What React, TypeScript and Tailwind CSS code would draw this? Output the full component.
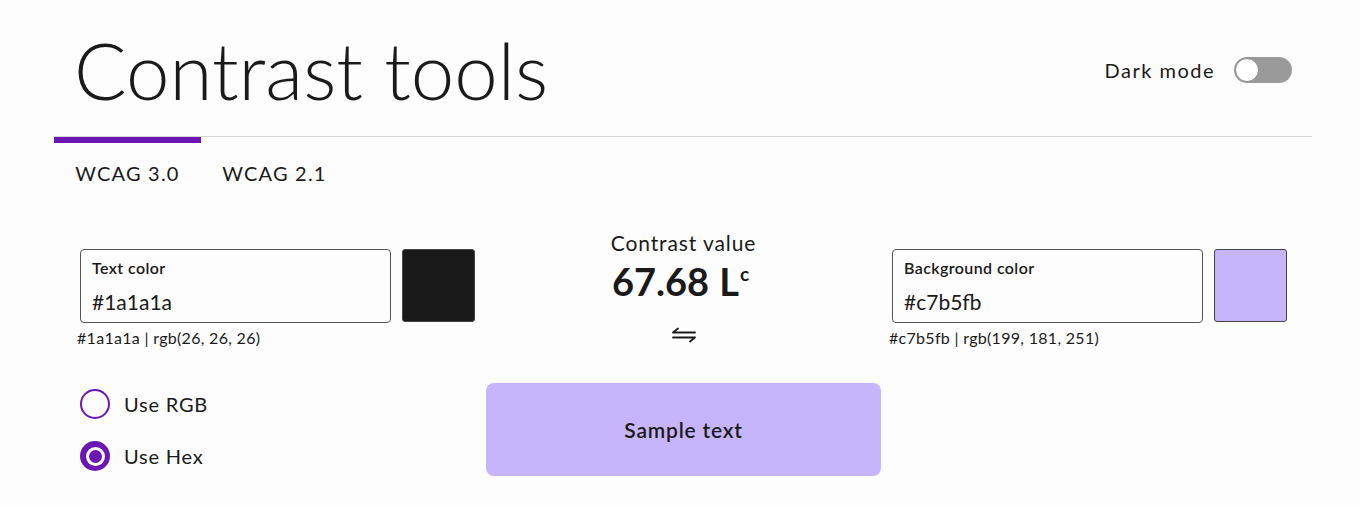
import React from 'react';

const font = { fontFamily: 'Lato, "Noto Sans", sans-serif' };

const ColorField: React.FC<{ label: string; value: string; rgb: string }> = ({ label, value, rgb }) => (
  <div className="pt-[18px]">
    <div className="flex gap-[11px]">
      <div className="w-[311px] h-[74px] border border-[#555] rounded-[4px] px-[11px] pt-[8px]">
        <div className="text-[16px] leading-[20px] font-semibold text-[#1a1a1a] tracking-[0.4px]">{label}</div>
        <div className="mt-[11px] text-[21px] leading-[26px] text-[#1a1a1a]">{value}</div>
      </div>
      <div
        className="w-[73px] h-[73px] rounded-[3px] border border-[#444]"
        style={{ backgroundColor: value }}
      />
    </div>
    <div className="mt-[5px] -ml-[3px] text-[16px] leading-[20px] text-[#1a1a1a] tracking-[0.3px]">
      {value} | {rgb}
    </div>
  </div>
);

const Radio: React.FC<{ checked?: boolean; label: string }> = ({ checked, label }) => (
  <div className="flex items-center h-[30px] gap-[14px]">
    {checked ? (
      <div className="w-[30px] h-[30px] rounded-full bg-[#6b17b3] flex items-center justify-center">
        <div className="w-[19px] h-[19px] rounded-full bg-white flex items-center justify-center">
          <div className="w-[13px] h-[13px] rounded-full bg-[#6b17b3]" />
        </div>
      </div>
    ) : (
      <div className="w-[30px] h-[30px] rounded-full border-[2.5px] border-[#6b17b3]" />
    )}
    <span className="text-[20px] leading-[24px] text-[#1a1a1a] tracking-[0.8px]">{label}</span>
  </div>
);

const App: React.FC = () => {
  return (
    <div className="w-[1360px] h-[505px] bg-[#fdfdfd] overflow-hidden" style={font}>
      <div className="ml-[54px] mr-[48px]">
        {/* Header */}
        <div className="h-[136px] pt-[31px] pl-[20px] pr-[20px] flex items-start justify-between">
          <h1 className="text-[78px] leading-[78px] font-light text-[#1a1a1a]">
            Contrast tools
          </h1>
          <div className="flex items-center gap-[19px] h-[78px]">
            <span className="text-[20px] leading-[24px] text-[#1a1a1a] tracking-[1.5px]">Dark mode</span>
            <div className="w-[58px] h-[26px] rounded-full bg-[#9a9a9a] flex items-center px-[1px]">
              <div className="w-[24px] h-[24px] rounded-full bg-white border border-[#8a8a8a]" />
            </div>
          </div>
        </div>

        {/* Tabs */}
        <div className="border-t border-[#d4d4d4] flex">
          <div className="w-[147px] h-[73px] flex flex-col">
            <div className="h-[6px] bg-[#6b17b3]" />
            <div className="flex-1 flex items-center justify-center pb-[8px] text-[20px] text-[#1a1a1a] tracking-[1.2px]">
              WCAG 3.0
            </div>
          </div>
          <div className="w-[147px] h-[73px] flex flex-col">
            <div className="h-[6px]" />
            <div className="flex-1 flex items-center justify-center pb-[8px] text-[20px] text-[#1a1a1a] tracking-[1.2px]">
              WCAG 2.1
            </div>
          </div>
        </div>

        {/* Main grid */}
        <div className="pl-[26px] mt-[21px] grid grid-cols-[395px_395px_395px] gap-x-[11px]">
          <ColorField label="Text color" value="#1a1a1a" rgb="rgb(26, 26, 26)" />
          <div className="flex flex-col items-center">
            <div className="text-[21px] leading-[24px] text-[#1a1a1a] tracking-[0.9px]">Contrast value</div>
            <div className="mt-[7px] flex items-start text-[38px] leading-[38px] font-bold text-[#1a1a1a] -ml-[6px]">
              <span>67.68</span>
              <span className="ml-[10px]">L</span>
              <span className="text-[19px] leading-[19px] ml-[1px] mt-[2px]">c</span>
            </div>
            <svg className="mt-[27px]" width="26" height="16" viewBox="0 0 26 16" fill="none">
              <path d="M2 5.5H24M2 5.5L7 1.5" stroke="#1a1a1a" strokeWidth="1.8" strokeLinecap="round" strokeLinejoin="round" />
              <path d="M2 10.5H24M24 10.5L19 14.5" stroke="#1a1a1a" strokeWidth="1.8" strokeLinecap="round" strokeLinejoin="round" />
            </svg>
          </div>
          <ColorField label="Background color" value="#c7b5fb" rgb="rgb(199, 181, 251)" />
        </div>

        <div className="pl-[26px] mt-[35px] grid grid-cols-[395px_395px_395px] gap-x-[11px]">
          <div className="pt-[6px] flex flex-col gap-[22px]">
            <Radio label="Use RGB" />
            <Radio checked label="Use Hex" />
          </div>
          <div className="h-[93px] rounded-[8px] bg-[#c7b5fb] flex items-center justify-center">
            <span className="text-[21px] font-semibold text-[#1a1a1a] tracking-[0.8px]">Sample text</span>
          </div>
          <div />
        </div>
      </div>
    </div>
  );
};

export default App;
